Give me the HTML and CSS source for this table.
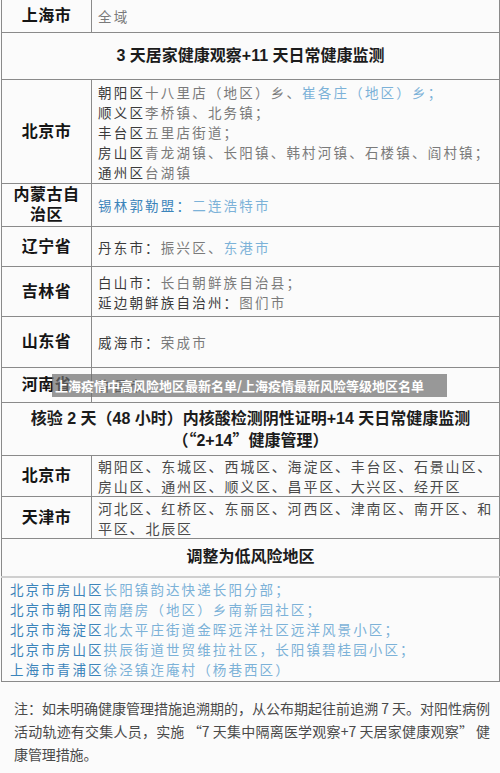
FILE: index.html
```html
<!DOCTYPE html>
<html lang="zh-CN">
<head>
<meta charset="utf-8">
<title>上海疫情中高风险地区最新名单</title>
<link rel="stylesheet" href="styles.css">
</head>
<body>
<div class="page">
  <table class="risk">
    <colgroup><col class="c1"><col class="c2"></colgroup>
    <tr class="r-sh">
      <td class="label">上海市</td>
      <td class="content">全域</td>
    </tr>
    <tr class="r-head1">
      <td class="head" colspan="2">3 天居家健康观察+11 天日常健康监测</td>
    </tr>
    <tr class="r-bj1">
      <td class="label">北京市</td>
      <td class="content">
        <div><b>朝阳区</b>十八里店（地区）乡、<span class="blue">崔各庄（地区）乡；</span></div>
        <div><b>顺义区</b>李桥镇、北务镇；</div>
        <div><b>丰台区</b>五里店街道；</div>
        <div><b>房山区</b>青龙湖镇、长阳镇、韩村河镇、石楼镇、阎村镇；</div>
        <div><b>通州区</b>台湖镇</div>
      </td>
    </tr>
    <tr class="r-nm">
      <td class="label">内蒙古自治区</td>
      <td class="content"><span class="blue-d">锡林郭勒盟：</span><span class="blue">二连浩特市</span></td>
    </tr>
    <tr class="r-ln">
      <td class="label">辽宁省</td>
      <td class="content"><b>丹东市：</b>振兴区、<span class="blue">东港市</span></td>
    </tr>
    <tr class="r-jl">
      <td class="label">吉林省</td>
      <td class="content">
        <div><b>白山市：</b>长白朝鲜族自治县；</div>
        <div><b>延边朝鲜族自治州：</b>图们市</div>
      </td>
    </tr>
    <tr class="r-sd">
      <td class="label">山东省</td>
      <td class="content"><b>威海市：</b>荣成市</td>
    </tr>
    <tr class="r-hn">
      <td class="label">河南省</td>
      <td class="content"><b>许昌市</b></td>
    </tr>
    <tr class="r-head2">
      <td class="head head2" colspan="2">核验 2 天（48 小时）内核酸检测阴性证明+14 天日常健康监测<br>（<span class="q">“</span>2+14<span class="q">”</span>健康管理）</td>
    </tr>
    <tr class="r-bj2">
      <td class="label">北京市</td>
      <td class="content dark">朝阳区、东城区、西城区、海淀区、丰台区、石景山区、房山区、通州区、顺义区、昌平区、大兴区、经开区</td>
    </tr>
    <tr class="r-tj">
      <td class="label">天津市</td>
      <td class="content dark">河北区、红桥区、东丽区、河西区、津南区、南开区、和平区、北辰区</td>
    </tr>
    <tr class="r-head3">
      <td class="head" colspan="2">调整为低风险地区</td>
    </tr>
    <tr class="r-low">
      <td class="lowlist" colspan="2">
        <div><span class="blue-d">北京市房山区</span>长阳镇韵达快递长阳分部；</div>
        <div><span class="blue-d">北京市朝阳区</span>南磨房（地区）乡南新园社区；</div>
        <div><span class="blue-d">北京市海淀区</span>北太平庄街道金晖远洋社区远洋风景小区；</div>
        <div><span class="blue-d">北京市房山区</span>拱辰街道世贸维拉社区，长阳镇碧桂园小区；</div>
        <div><span class="blue-d">上海市青浦区</span>徐泾镇迮庵村（杨巷西区）</div>
      </td>
    </tr>
  </table>
  <p class="note">注：如未明确健康管理措施追溯期的，从公布期起往前追溯 7 天。对阳性病例活动轨迹有交集人员，实施 “7 天集中隔离医学观察+7 天居家健康观察” 健康管理措施。</p>
  <div class="banner">上海疫情中高风险地区最新名单/上海疫情最新风险等级地区名单</div>
</div>
</body>
</html>
```

FILE: styles.css
```css
html, body {
  margin: 0;
  padding: 0;
  background: #fbfbfb;
}
body {
  font-family: "Liberation Sans", "Noto Sans CJK SC", sans-serif;
  color: #333;
}
.page {
  position: relative;
  width: 500px;
  height: 773px;
  overflow: hidden;
}
.risk {
  border-collapse: collapse;
  table-layout: fixed;
  width: 499px;
  margin-left: 1px;
  margin-top: -1px;
}
.risk .c1 { width: 90px; }
.risk td {
  border: 1px solid #8a8a8a;
  padding: 0;
  vertical-align: middle;
}
.label {
  text-align: center;
  font-weight: bold;
  font-size: 16px;
  line-height: 20px;
  color: #151515;
  padding: 0 6px !important;
  letter-spacing: 0.5px;
}
.content {
  font-family: "Noto Sans CJK SC", sans-serif;
  font-size: 13.5px;
  line-height: 20px;
  letter-spacing: 2.2px;
  color: #7a7a7a;
  padding: 0 2px 0 6px !important;
}
.content b {
  font-weight: normal;
  color: #3a3a3a;
}
.content.dark {
  color: #4a4a4a;
  font-size: 14px;
  letter-spacing: 1.8px;
}
.blue { color: #7cb2d8; }
.blue-d { color: #3b84ba; }
.head {
  text-align: center;
  font-weight: bold;
  font-size: 16px;
  line-height: 20px;
  color: #1c1c1c;
}
.head2 {
  font-weight: 600;
  line-height: 21px;
}
.head2 .q {
  font-family: "Noto Sans CJK SC", sans-serif;
}
.r-sh { height: 33px; }
.r-head1 { height: 47px; }
.r-bj1 { height: 104px; }
.r-nm { height: 43px; }
.r-ln { height: 40px; }
.r-jl { height: 50px; }
.r-sd { height: 51px; }
.r-hn { height: 35px; }
.r-head2 { height: 53px; }
.r-bj2 { height: 41px; }
.r-tj { height: 42px; }
.r-head3 { height: 38px; }
.r-low { height: 105px; }
.r-head3 td { border-bottom: 2px solid #cfcfcf; }
.lowlist {
  font-family: "Noto Sans CJK SC", sans-serif;
  font-size: 13.5px;
  line-height: 20px;
  letter-spacing: 2.1px;
  color: #7cb2d8;
  padding: 0 0 0 8px !important;
}
.note {
  margin: 15px 0 0 0;
  padding: 0 10px 0 14px;
  font-family: "Noto Sans CJK SC", sans-serif;
  font-size: 14px;
  letter-spacing: -0.12px;
  line-height: 23px;
  color: #4a4a4a;
  text-align: justify;
}
.banner {
  position: absolute;
  left: 52px;
  top: 374px;
  width: 392px;
  height: 23px;
  padding-left: 3px;
  background: rgba(110, 110, 110, 0.7);
  color: #fff;
  font-family: "Noto Sans CJK SC", sans-serif;
  font-weight: bold;
  font-size: 13px;
  line-height: 23px;
  white-space: nowrap;
}
```
